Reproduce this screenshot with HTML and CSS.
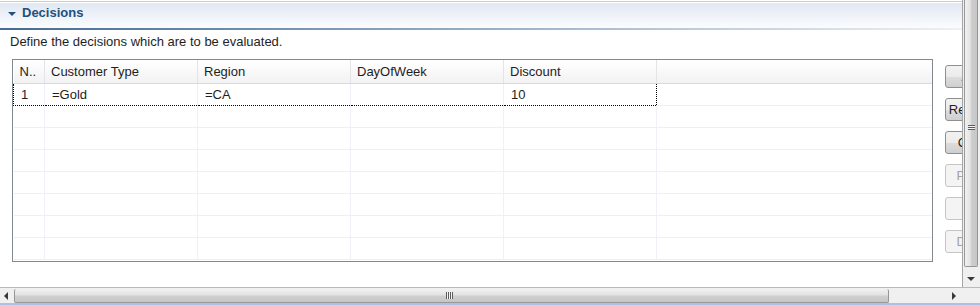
FILE: index.html
```html
<!DOCTYPE html>
<html lang="en">
<head>
  <meta charset="UTF-8">
  <title>Decisions</title>
  <link rel="stylesheet" href="styles.css">
</head>
<body>
<div class="window">
  <div class="viewport">
    <div class="content">
      <div class="top-rule"></div>
      <div class="section-head">
        <span class="twisty"></span>
        <span class="section-title">Decisions</span>
      </div>
      <p class="desc">Define the decisions which are to be evaluated.</p>

      <div class="section-body">
        <div class="grid">
          <table class="decisions">
            <colgroup>
              <col class="c-num">
              <col class="c-wide">
              <col class="c-wide">
              <col class="c-wide">
              <col class="c-wide">
              <col>
            </colgroup>
            <thead>
              <tr>
                <th>N..</th>
                <th>Customer Type</th>
                <th>Region</th>
                <th>DayOfWeek</th>
                <th>Discount</th>
                <th></th>
              </tr>
            </thead>
            <tbody>
              <tr class="focused">
                <td>1</td>
                <td>=Gold</td>
                <td>=CA</td>
                <td></td>
                <td>10</td>
                <td class="outside"></td>
              </tr>
              <tr><td></td><td></td><td></td><td></td><td></td><td></td></tr>
              <tr><td></td><td></td><td></td><td></td><td></td><td></td></tr>
              <tr><td></td><td></td><td></td><td></td><td></td><td></td></tr>
              <tr><td></td><td></td><td></td><td></td><td></td><td></td></tr>
              <tr><td></td><td></td><td></td><td></td><td></td><td></td></tr>
              <tr><td></td><td></td><td></td><td></td><td></td><td></td></tr>
              <tr class="last"><td></td><td></td><td></td><td></td><td></td><td></td></tr>
            </tbody>
          </table>
        </div>

        <div class="buttons">
          <button class="btn">Add</button>
          <button class="btn">Remove</button>
          <button class="btn">Copy</button>
          <button class="btn" disabled>Paste</button>
          <button class="btn" disabled>Up</button>
          <button class="btn" disabled>Down</button>
        </div>
      </div>
    </div>

    <div class="vscroll">
      <div class="vthumb"><span class="grip-h"></span></div>
      <div class="arrow-down"></div>
    </div>
  </div>

  <div class="hscroll">
    <div class="arrow-left"></div>
    <div class="hthumb"><span class="grip-v"></span></div>
    <div class="arrow-right"></div>
  </div>
</div>
</body>
</html>
```

FILE: styles.css
```css
body {
  margin: 0;
  background-color: #fff;
  font-family: "Liberation Sans", Arial, sans-serif;
  font-size: 13px;
  color: #1e1e1e;
}

.window {
  width: 980px;
  height: 305px;
  display: flex;
  flex-direction: column;
  overflow: hidden;
}

.viewport {
  display: flex;
  height: 288px;
}

.content {
  width: 963px;
  overflow: hidden;
}

/* section header */
.top-rule {
  height: 1px;
  margin-top: 1px;
  background-color: #c9ccd1;
}

.section-head {
  height: 23px;
  margin-top: 1px;
  padding-top: 2px;
  display: flex;
  align-items: flex-start;
  line-height: 16px;
  background: linear-gradient(#e1e8f2, #fbfcfe);
  border-bottom: 2px solid;
  border-image: linear-gradient(to right, #456c93, #9fb5cb 55%, #eef1f5) 1;
}

.twisty {
  width: 0;
  height: 0;
  margin: 7px 6px 0 8px;
  border-left: 4px solid transparent;
  border-right: 4px solid transparent;
  border-top: 4px solid #21507d;
}

.section-title {
  font-weight: bold;
  color: #21507d;
}

.desc {
  margin: 3px 0 0 10px;
  height: 17px;
  line-height: 17px;
}

.section-body {
  display: flex;
  gap: 12px;
  margin-top: 9px;
  padding-left: 12px;
}

/* table */
.grid {
  width: 919px;
  height: 201px;
  border: 1px solid #828790;
  overflow: hidden;
  flex-shrink: 0;
}

.decisions {
  border-collapse: collapse;
  table-layout: fixed;
  width: 919px;
}

.c-num {
  width: 31px;
}

.c-wide {
  width: 153px;
}

.decisions th {
  height: 23px;
  padding: 0 0 0 6px;
  text-align: left;
  font-weight: normal;
  background: linear-gradient(#fff, #f2f2f2);
  border-right: 1px solid #e3e4e7;
  border-bottom: 1px solid #d8dadd;
}

.decisions td {
  height: 21px;
  padding: 0 0 0 7px;
  border-right: 1px solid #eef1f7;
  border-bottom: 1px solid #efeff0;
}

.decisions td:last-child,
.decisions th:last-child {
  border-right: none;
}

.focused td {
  border-top: 1px dotted #000;
  border-bottom: 1px dotted #000;
}

.focused td:first-child {
  border-left: 1px dotted #000;
}

.focused td:nth-child(5) {
  border-right: 1px dotted #000;
}

.focused td.outside {
  border-top: none;
  border-bottom: 1px solid #efeff0;
}

/* buttons, cut off by the vertical scrollbar */
.buttons {
  display: flex;
  flex-direction: column;
  gap: 10px;
  padding-top: 6px;
}

.btn {
  width: 56px;
  height: 23px;
  padding: 0;
  font-family: inherit;
  font-size: 13px;
  color: #1e1e1e;
  border: 1px solid #8e8f8f;
  border-radius: 3px;
  background: linear-gradient(#f2f2f2 0%, #ebebeb 50%, #dddddd 51%, #cfcfcf 100%);
}

.btn:disabled {
  color: #a3a3a3;
  border-color: #c5c5c5;
  background: #f4f4f4;
}

/* scrollbars */
.vscroll {
  width: 17px;
  background-color: #f0f0f0;
  border-left: 1px solid #a5a5a5;
}

.vthumb {
  height: 266px;
  margin: 0 2px 0 1px;
  border: 1px solid #979797;
  border-top: none;
  border-radius: 0 0 2px 2px;
  background: linear-gradient(to right, #f1f1f1, #e3e3e3 45%, #cfcfcf 50%, #c6c6c6);
  display: flex;
  align-items: center;
  justify-content: center;
}

.grip-h {
  width: 7px;
  height: 5px;
  margin-top: -12px;
  background: repeating-linear-gradient(#5c5c5c 0 1px, #f4f4f4 1px 2px);
}

.arrow-down {
  width: 0;
  height: 0;
  margin: 10px 0 0 4px;
  border-left: 4px solid transparent;
  border-right: 4px solid transparent;
  border-top: 4px solid #3a3a3a;
}

.hscroll {
  height: 15px;
  display: flex;
  align-items: center;
  background-color: #f0f0f0;
  border-top: 1px solid #b9b9b9;
  border-bottom: 2px solid #a9c4e0;
}

.arrow-left {
  width: 0;
  height: 0;
  margin: 0 6px 0 4px;
  border-top: 4px solid transparent;
  border-bottom: 4px solid transparent;
  border-right: 4px solid #3a3a3a;
}

.hthumb {
  width: 873px;
  height: 13px;
  border: 1px solid #979797;
  border-top: none;
  border-radius: 2px;
  background: linear-gradient(#f1f1f1, #e3e3e3 45%, #cfcfcf 55%, #c6c6c6);
  display: flex;
  align-items: center;
  justify-content: center;
}

.grip-v {
  width: 7px;
  height: 7px;
  margin-left: -5px;
  background: repeating-linear-gradient(to right, #5c5c5c 0 1px, #f4f4f4 1px 2px);
}

.arrow-right {
  width: 0;
  height: 0;
  margin-left: 63px;
  border-top: 4px solid transparent;
  border-bottom: 4px solid transparent;
  border-left: 4px solid #3a3a3a;
}
```
